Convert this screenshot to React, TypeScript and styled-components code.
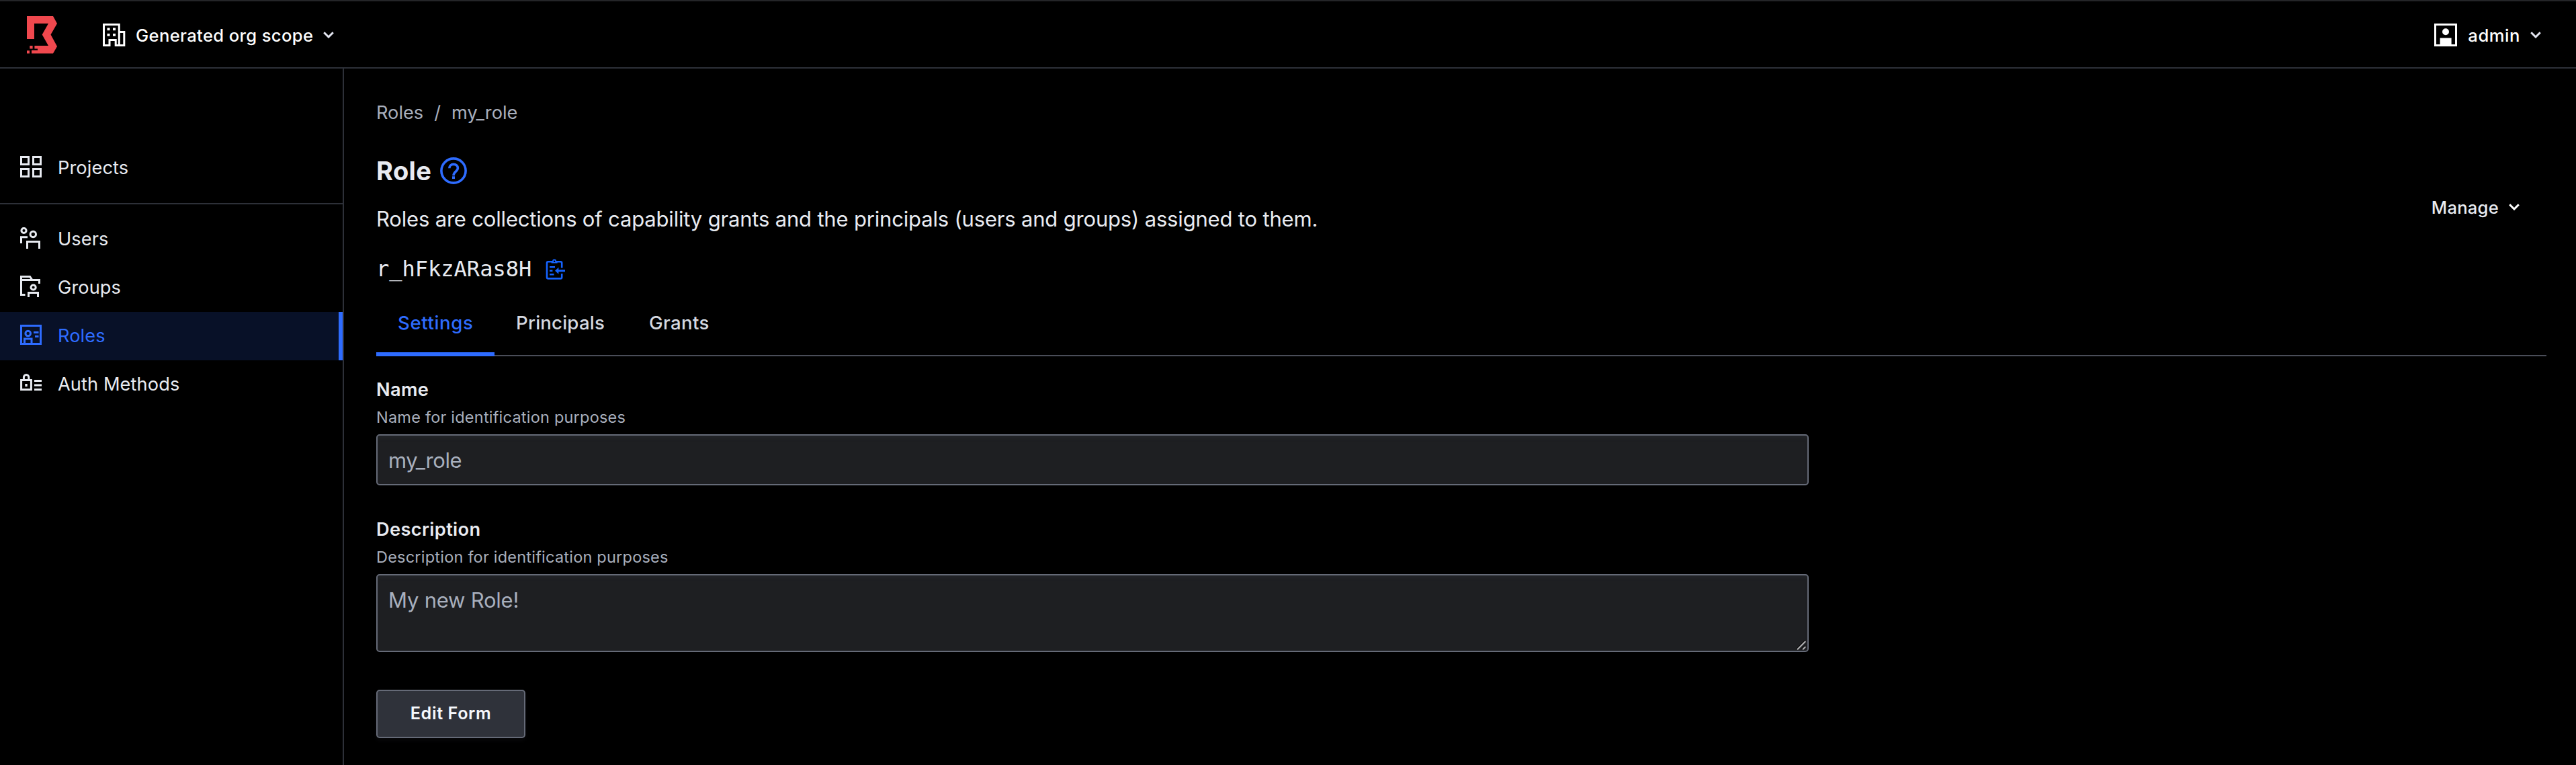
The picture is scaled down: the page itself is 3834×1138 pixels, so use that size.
import React from 'react';
import styled, { createGlobalStyle } from 'styled-components';

const c = {
  text: '#e8ebf1',
  faint: '#a8afbd',
  blue: '#2e6cff',
  line: '#2d3038',
  field: '#656a77',
};

const Global = createGlobalStyle`
  * { box-sizing: border-box; }
  body { margin: 0; background: #000; color: ${c.text}; font-family: Inter, "Liberation Sans", sans-serif; }
  button, input, textarea { font-family: inherit; margin: 0; }
  svg { display: block; flex: none; }
`;

const Page = styled.div`
  display: flex;
  flex-direction: column;
  height: 1138px;
  overflow: hidden;
  background: #000;
`;

const Header = styled.header`
  display: flex;
  align-items: center;
  justify-content: space-between;
  height: 102px;
  padding: 2px 52px 0 39px;
  border-top: 2px solid #242528;
  border-bottom: 2px solid ${c.line};
`;

const HeaderGroup = styled.div`
  display: flex;
  align-items: center;
`;

const MenuButton = styled.button<{ $color?: string }>`
  display: flex;
  align-items: center;
  padding: 0;
  border: 0;
  background: none;
  color: ${(p) => p.$color || '#fff'};
`;

const MenuLabel = styled.span<{ $track: number; $left: number }>`
  margin: 2px 15px 0 ${(p) => p.$left}px;
  font-size: 25.6px;
  font-weight: 550;
  line-height: 32px;
  letter-spacing: ${(p) => p.$track}px;
  white-space: nowrap;
`;

const Logo = styled.svg`
  width: 47px;
  height: 58px;
  margin-right: 67px;
`;

const Body = styled.div`
  display: flex;
  flex: 1;
  min-height: 0;
`;

const Sidebar = styled.nav`
  flex: none;
  width: 512px;
  padding-top: 112px;
  border-right: 2px solid ${c.line};
`;

const NavGroup = styled.div`
  & + & {
    margin-top: 16px;
    padding-top: 16px;
    border-top: 2px solid ${c.line};
  }
`;

const NavItem = styled.a<{ $active?: boolean }>`
  display: flex;
  height: 72px;
  padding: 0 0 0 28px;
  color: ${(p) => (p.$active ? c.blue : c.text)};
  background: ${(p) => (p.$active ? '#081128' : 'transparent')};
  border-right: 6px solid ${(p) => (p.$active ? c.blue : 'transparent')};
  svg { margin-top: 16px; }
`;

const NavLabel = styled.span`
  margin-left: 22px;
  font-size: 27.2px;
  line-height: 72px;
  letter-spacing: 0.1px;
`;

const Main = styled.main`
  flex: 1;
  padding: 46px 44px 0 48px;
`;

const Breadcrumbs = styled.div`
  display: flex;
  gap: 16px;
  font-size: 27.2px;
  line-height: 40px;
  color: ${c.faint};
`;

const PageHead = styled.div`
  display: flex;
  justify-content: space-between;
  align-items: flex-start;
  margin-top: 42px;
  padding-right: 40px;
`;

const TitleRow = styled.div`
  display: flex;
  align-items: center;
  gap: 13px;
  height: 48px;
`;

const Title = styled.h1`
  margin: 0;
  font-size: 38px;
  font-weight: 700;
  line-height: 48px;
  letter-spacing: 0.4px;
  font-optical-sizing: none;
`;

const Lead = styled.p`
  margin: 26px 0 0;
  font-size: 31px;
  line-height: 44px;
  letter-spacing: -0.18px;
`;

const IdRow = styled.div`
  display: flex;
  align-items: center;
  gap: 21px;
  height: 48px;
  margin-top: 28px;
`;

const Identifier = styled.code`
  font-family: "DejaVu Sans Mono", monospace;
  font-size: 32px;
  line-height: 48px;
`;

const ManageSlot = styled.div`
  display: flex;
  align-items: center;
  height: 72px;
  margin-top: 42px;
`;

const Tabs = styled.div`
  display: flex;
  height: 100px;
  margin-top: 6px;
  box-shadow: inset 0 -2px #4a4d58;
`;

const Tab = styled.button<{ $active?: boolean; $width: number; $track: number }>`
  width: ${(p) => p.$width}px;
  padding: 0 0 0 32px;
  border: 0;
  background: none;
  text-align: left;
  color: ${(p) => (p.$active ? c.blue : '#d5d9e0')};
  box-shadow: ${(p) => (p.$active ? `inset 0 -6px ${c.blue}` : 'none')};
  font-size: 27.6px;
  font-weight: 550;
  line-height: 100px;
  letter-spacing: ${(p) => p.$track}px;
`;

const Form = styled.form`
  width: 2132px;
  padding-top: 32px;
`;

const Field = styled.div`
  display: flex;
  flex-direction: column;
  & + & { margin-top: 48px; }
`;

const Label = styled.label`
  font-size: 27.2px;
  font-weight: 600;
  line-height: 36px;
  letter-spacing: 0.36px;
`;

const Help = styled.div`
  margin: 7px 0 9px;
  font-size: 23.5px;
  line-height: 32px;
  letter-spacing: 0.22px;
  color: ${c.faint};
`;

const TextInput = styled.input`
  width: 100%;
  height: 76px;
  padding: 0 16px;
  border: 2px solid ${c.field};
  border-radius: 5px;
  background: #1e1f22;
  box-shadow: inset 0 6px 4px -2px #222427;
  color: ${c.faint};
  font-size: 31px;
  letter-spacing: -0.43px;
  outline: 0;
`;

const TextBoxWrap = styled.div`
  position: relative;
`;

const TextBox = styled.textarea`
  display: block;
  width: 100%;
  height: 116px;
  padding: 15px 16px;
  border: 2px solid ${c.field};
  border-radius: 5px;
  background: #1e1f22;
  box-shadow: inset 0 6px 4px -2px #222427;
  color: ${c.faint};
  font-size: 31px;
  line-height: 44px;
  letter-spacing: -0.22px;
  outline: 0;
  resize: none;
`;

const Grip = styled.svg`
  position: absolute;
  right: 3px;
  bottom: 2px;
  width: 16px;
  height: 16px;
`;

const EditButton = styled.button`
  width: 222px;
  height: 72px;
  margin-top: 56px;
  padding: 0 0 2px;
  border: 2px solid ${c.field};
  border-radius: 5px;
  background: #2f323a;
  box-shadow: 0 4px 6px #08080a;
  color: #f6f8fc;
  font-size: 25.2px;
  font-weight: 640;
  letter-spacing: 0.6px;
`;

const Chevron = ({ color = 'currentColor' }: { color?: string }) => (
  <svg width="16" height="10" viewBox="0 0 16 10" fill="none" stroke={color} strokeWidth="3">
    <path d="M1.2 1.3 8 8l6.8-6.7" />
  </svg>
);

const NavIcon = ({ children }: { children: React.ReactNode }) => (
  <svg width="36" height="36" viewBox="0 0 36 36" fill="none" stroke="currentColor" strokeWidth="3">
    {children}
  </svg>
);

const icons: Record<string, React.ReactNode> = {
  Projects: <path d="M3.5 3.5h11v11h-11zM21.5 3.5h11v11h-11zM3.5 21.5h11v11h-11zM21.5 21.5h11v11h-11z" />,
  Users: (
    <>
      <circle cx="7.5" cy="7" r="3.6" />
      <circle cx="21.3" cy="12.5" r="4.2" />
      <path d="M3.5 26v-9.2H13M12.5 34V23.5h18V34" />
    </>
  ),
  Groups: (
    <>
      <path d="M9.5 30.5h-6v-27h13l3.5 5M3.5 8.5h27V14M14.5 34v-6.5h14V34" />
      <circle cx="21.6" cy="19.5" r="3.6" />
    </>
  ),
  Roles: (
    <>
      <path d="M3.5 4.5h29v27h-29zM8.5 31v-7H19v7M22 14.5h7.5M24 20.5h5.5" />
      <circle cx="13.7" cy="16" r="3.8" />
    </>
  ),
  'Auth Methods': (
    <>
      <path d="M3.6 13.6h14.8v13.8H3.6zM7.4 13V9.3a3.7 3.7 0 0 1 7.4 0V13M23 14.5h11M23 21h11M23 27.5h11" />
      <path d="M9.3 21h3.4" strokeWidth="4" />
    </>
  ),
};

const navGroups = [['Projects'], ['Users', 'Groups', 'Roles', 'Auth Methods']];

const tabs = [
  { name: 'Settings', width: 176, track: 0.6 },
  { name: 'Principals', width: 198, track: 0.2 },
  { name: 'Grants', width: 154, track: 0.4 },
];

export default function App() {
  return (
    <Page>
      <Global />
      <Header>
        <HeaderGroup>
          <Logo viewBox="39 23 47 58" fill="#f0484e">
            <path d="M40 24h39l6 11-9.5 16.5L85 69l-6 10.6H47v-4.8h9v-2.3h-4.6V68H72l-9.3-16.5L72 35H51v23H40z" />
            <path d="M44.3 68h4.3v4.5h-4.3zM40 75.2h4v4.4h-4z" />
          </Logo>
          <MenuButton>
            <svg width="34" height="34" viewBox="0 0 34 34" fill="none" stroke="#fff" strokeWidth="3">
              <path d="M1.5 1.5h22.8v31h-5.1v-8H10v8H1.5zM24.3 12.5h7.5v20h-7.5" />
              <path d="M6.5 8.3h4M15 8.3h4M6.5 16.8h4M15 16.8h4" strokeWidth="3.8" />
            </svg>
            <MenuLabel $left={15} $track={0.36}>Generated org scope</MenuLabel>
            <Chevron color="#e3e5f0" />
          </MenuButton>
        </HeaderGroup>
        <MenuButton>
          <svg width="34" height="34" viewBox="0 0 34 34">
            <path d="M1.5 1.5h31v31h-31z" fill="none" stroke="#fff" strokeWidth="3" />
            <circle cx="17" cy="12.3" r="5" fill="#fff" />
            <path d="M8.6 21.5h17V33h-17z" fill="#fff" />
          </svg>
          <MenuLabel $left={16} $track={0.55}>admin</MenuLabel>
          <Chevron color="#e3e5f0" />
        </MenuButton>
      </Header>
      <Body>
        <Sidebar>
          {navGroups.map((group) => (
            <NavGroup key={group[0]}>
              {group.map((name) => (
                <NavItem key={name} $active={name === 'Roles'}>
                  <NavIcon>{icons[name]}</NavIcon>
                  <NavLabel>{name}</NavLabel>
                </NavItem>
              ))}
            </NavGroup>
          ))}
        </Sidebar>
        <Main>
          <Breadcrumbs>
            <span>Roles</span>
            <span>/</span>
            <span>my_role</span>
          </Breadcrumbs>
          <PageHead>
            <div>
              <TitleRow>
                <Title>Role</Title>
                <svg width="40" height="40" viewBox="0 0 40 40" fill="none" stroke={c.blue} strokeWidth="3.6">
                  <circle cx="20" cy="20" r="18.1" />
                  <path d="M13.8 16.2c0-3.4 2.6-5.8 6.2-5.8s6.4 2.3 6.4 5.6c0 5.2-6.4 5.2-6.4 11.2" />
                  <path d="M20 28.3v3.8" strokeWidth="4" />
                </svg>
              </TitleRow>
              <Lead>
                Roles are collections of capability grants and the principals (users and groups) assigned to them.
              </Lead>
              <IdRow>
                <Identifier>r_hFkzARas8H</Identifier>
                <svg width="30" height="32" viewBox="0 0 30 32" fill="none" stroke="#1563ff" strokeWidth="2.6">
                  <path d="M24.2 14.5V7.2a2 2 0 0 0-2-2H4a2 2 0 0 0-2 2v21.2a2 2 0 0 0 2 2h18.2a2 2 0 0 0 2-2v-5.4" />
                  <path d="M9.3 6.8h7.6V4.6h-1.5a2.3 2.3 0 0 0-4.6 0H9.3z" fill="#1563ff" strokeWidth="1.4" />
                  <circle cx="13.1" cy="4.8" r="1.2" fill="#000" stroke="none" />
                  <path d="M6 13.2h8M6 18.8h4.4M6 24.3h6.5" />
                  <path d="M17 18.8h12" strokeWidth="3" />
                  <path d="M14 18.8l5.4-5v10z" fill="#1563ff" stroke="none" />
                </svg>
              </IdRow>
            </div>
            <ManageSlot>
              <MenuButton $color={c.text}>
                <MenuLabel $left={0} $track={0.25}>Manage</MenuLabel>
                <Chevron color="#fff" />
              </MenuButton>
            </ManageSlot>
          </PageHead>
          <Tabs>
            {tabs.map((t, i) => (
              <Tab key={t.name} $active={i === 0} $width={t.width} $track={t.track}>
                {t.name}
              </Tab>
            ))}
          </Tabs>
          <Form>
            <Field>
              <Label>Name</Label>
              <Help>Name for identification purposes</Help>
              <TextInput defaultValue="my_role" readOnly />
            </Field>
            <Field>
              <Label>Description</Label>
              <Help>Description for identification purposes</Help>
              <TextBoxWrap>
                <TextBox defaultValue="My new Role!" readOnly />
                <Grip viewBox="0 0 16 16" fill="none">
                  <path d="M1 13.5 13.5 1M9 13.5l4.5-4.5" stroke="#0a0a0b" strokeWidth="2" />
                  <path d="M2 14.3 14.3 2M10 14.3l4.3-4.3" stroke="#b4b4b6" strokeWidth="2" />
                </Grip>
              </TextBoxWrap>
            </Field>
            <EditButton type="button">Edit Form</EditButton>
          </Form>
        </Main>
      </Body>
    </Page>
  );
}
